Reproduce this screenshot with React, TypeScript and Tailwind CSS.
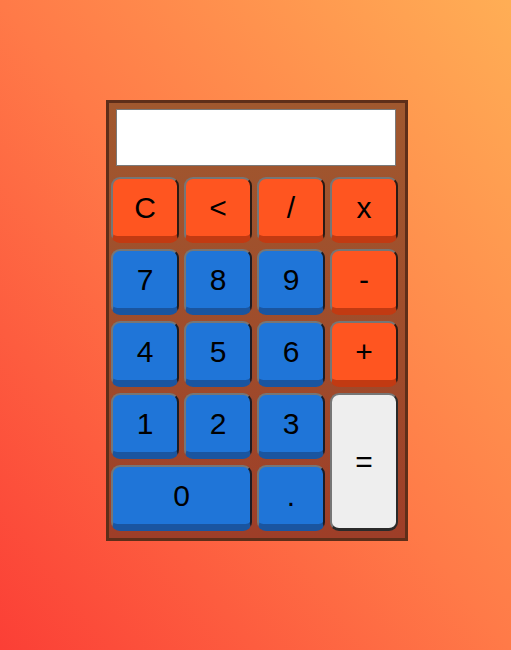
const keys = [
  { label: "C", kind: "op" },
  { label: "<", kind: "op" },
  { label: "/", kind: "op" },
  { label: "x", kind: "op" },
  { label: "7", kind: "num" },
  { label: "8", kind: "num" },
  { label: "9", kind: "num" },
  { label: "-", kind: "op" },
  { label: "4", kind: "num" },
  { label: "5", kind: "num" },
  { label: "6", kind: "num" },
  { label: "+", kind: "op" },
  { label: "1", kind: "num" },
  { label: "2", kind: "num" },
  { label: "3", kind: "num" },
  { label: "=", kind: "eq" },
  { label: "0", kind: "zero" },
  { label: ".", kind: "num" },
]

function Key({ label, kind }: { label: string; kind: string }) {
  const base =
    "flex items-center justify-center rounded-[9px] border-2 border-t-[#767676] border-l-[#767676] text-[30px] leading-none text-black"
  if (kind === "eq") {
    return (
      <button className={`${base} row-span-2 bg-[#eeeeee] border-r-[#2a2a2a] border-b-[3px] border-b-[#2a2a2a]`}>
        {label}
      </button>
    )
  }
  const colour =
    kind === "op"
      ? "bg-[#ff5520] border-b-[#c23a12] border-r-[#2a1a14]"
      : "bg-[#1f75d8] border-b-[#1a55a0] border-r-[#1c1c24]"
  return (
    <button className={`${base} ${colour} border-b-[7px] ${kind === "zero" ? "col-span-2" : ""}`}>
      {label}
    </button>
  )
}

export default function App() {
  return (
    <div
      className="min-h-[650px] w-full bg-[linear-gradient(to_top_right,#fb3f36,#ff7a48_50%,#ffae55)] pt-[100px]"
      style={{ fontFamily: '"Liberation Sans", Arial, sans-serif' }}
    >
      <div className="ml-[106px] w-[302px] border-[3px] border-[#5e2e19] bg-[linear-gradient(to_bottom,#a0582f,#9f4b2b_60%,#9e3e28)] pt-[6px] pb-[7px]">
        {/* Display */}
        <div className="ml-[7px] mr-[9px] h-[57px] border border-[#7a7a7a] bg-white"></div>

        {/* Keys */}
        <div className="mt-[11px] grid grid-cols-[repeat(4,68px)] auto-rows-[66px] gap-x-[5px] gap-y-[6px] pl-[2px]">
          {keys.map((k) => (
            <Key key={k.label} label={k.label} kind={k.kind} />
          ))}
        </div>
      </div>
    </div>
  )
}
